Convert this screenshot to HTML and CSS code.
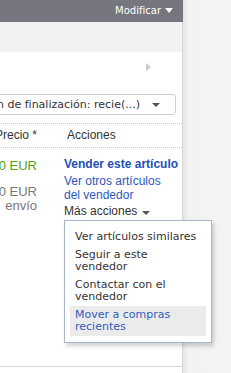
FILE: index.html
```html
<!DOCTYPE html>
<html lang="es">
<head>
<meta charset="utf-8">
<title>Compras</title>
<link rel="stylesheet" href="styles.css">
</head>
<body>
<div class="page">
  <div class="main">
    <div class="topbar"><span class="modify">Modificar</span><span class="tri-white"></span></div>
    <div class="band"></div>
    <div class="toolbar"><span class="tri-right"></span></div>
    <div class="sort"><span class="sort-text">Opción de finalización: recie(...)</span><span class="tri-down"></span></div>
    <div class="thead">
      <div class="th th-price">Precio *</div>
      <div class="th th-actions">Acciones</div>
    </div>
    <div class="row">
      <div class="price">
        <div class="price-main">0 EUR</div>
        <div class="price-ship">50 EUR</div>
        <div class="price-ship">envío</div>
      </div>
      <div class="actions">
        <a class="act-primary">Vender este artículo</a>
        <a class="act-link">Ver otros artículos del vendedor</a>
        <div class="more">
          <span class="more-label">Más acciones</span><span class="tri-more"></span>
          <ul class="menu">
            <li class="menu-item">Ver artículos similares</li>
            <li class="menu-item">Seguir a este vendedor</li>
            <li class="menu-item">Contactar con el vendedor</li>
            <li class="menu-item menu-item-active">Mover a compras recientes</li>
          </ul>
        </div>
      </div>
    </div>
    <div class="tail"></div>
  </div>
  <div class="side"></div>
</div>
</body>
</html>
```
FILE: styles.css
```css
* { box-sizing: border-box; }
html, body { margin: 0; padding: 0; }
body {
  width: 231px;
  height: 373px;
  overflow: hidden;
  background: #f4f4f4;
  font-family: "Liberation Sans", Arial, sans-serif;
}
.page {
  display: flex;
  height: 373px;
}
.main {
  width: 183px;
  flex: none;
  background: #fff;
  border-right: 1px solid #d9d9d9;
  display: flex;
  flex-direction: column;
}
.side {
  flex: 1;
  background: linear-gradient(to right, #e4e4e4, #f2f2f2 5px, #f4f4f4);
}
.topbar {
  height: 22px;
  margin-right: -1px;
  background: #75767e;
  display: flex;
  align-items: center;
  justify-content: flex-end;
  padding-right: 10px;
  padding-bottom: 2px;
  gap: 4px;
}
.modify {
  font-family: "DejaVu Sans", Verdana, sans-serif;
  font-size: 10px;
  color: #fff;
}
.tri-white {
  width: 0; height: 0;
  border-left: 4px solid transparent;
  border-right: 4px solid transparent;
  border-top: 5px solid #fff;
}
.band {
  height: 30px;
  background: #f2f2f2;
}
.toolbar {
  height: 42px;
  display: flex;
  justify-content: flex-end;
  align-items: flex-start;
  padding-top: 11px;
  padding-right: 31px;
}
.tri-right {
  width: 0; height: 0;
  border-top: 4px solid transparent;
  border-bottom: 4px solid transparent;
  border-left: 5px solid #c9c9c9;
}
.sort {
  height: 21px;
  margin: 0 6px 0 -60px;
  border: 1px solid #cfcfcf;
  border-radius: 3px;
  display: flex;
  justify-content: flex-end;
  align-items: center;
  padding-right: 15px;
  gap: 12px;
  overflow: hidden;
}
.sort-text {
  white-space: nowrap;
  font-family: "DejaVu Sans", Verdana, sans-serif;
  font-size: 11px;
  color: #333;
  flex: none;
}
.tri-down {
  flex: none;
  width: 0; height: 0;
  border-left: 4px solid transparent;
  border-right: 4px solid transparent;
  border-top: 4px solid #555;
}
.thead {
  margin-top: 8px;
  margin-left: -63px;
  border-top: 1px dotted #c8c8c8;
  border-bottom: 1px dotted #c8c8c8;
  display: grid;
  grid-template-columns: 100px 1fr;
  column-gap: 27px;
  font-size: 12px;
  line-height: 23px;
  color: #333;
}
.th-price { text-align: right; }
.th-actions { padding-left: 3px; }
.row {
  margin-left: -63px;
  display: grid;
  grid-template-columns: 100px 1fr;
  column-gap: 27px;
  padding-top: 9px;
}
.price { text-align: right; padding-top: 1px; }
.price-main {
  font-size: 13px;
  line-height: 16px;
  margin-bottom: 11px;
  color: #52a412;
}
.price-ship {
  font-size: 13px;
  line-height: 14px;
  color: #777;
}
.actions {
  font-size: 12px;
  line-height: 14px;
  display: flex;
  flex-direction: column;
  align-items: flex-start;
}
.act-primary {
  font-weight: bold;
  color: #2250b4;
  white-space: nowrap;
}
.act-link {
  margin-top: 3px;
  color: #2a58bc;
  width: 104px;
}
.more {
  margin-top: 2px;
  position: relative;
  display: flex;
  align-items: center;
  gap: 5px;
  color: #333;
}
.tri-more {
  width: 0; height: 0;
  margin-top: 3px;
  border-left: 4px solid transparent;
  border-right: 4px solid transparent;
  border-top: 4px solid #555;
}
.menu {
  position: absolute;
  top: calc(100% + 2px);
  left: 0;
  width: 148px;
  margin: 0;
  list-style: none;
  padding: 7px 5px 6px 5px;
  background: #fff;
  border: 1px solid #a9b6c8;
  box-shadow: 2px 3px 4px rgba(0, 0, 0, 0.18);
  z-index: 5;
}
.menu-item {
  padding: 3px 5px;
  font-family: "DejaVu Sans", Verdana, sans-serif;
  font-size: 11px;
  line-height: 12px;
  color: #333;
}
.menu-item-active {
  background: #ebebeb;
  color: #2f5dbd;
}
.tail {
  margin-top: auto;
  height: 7px;
  border-top: 1px solid #d4d4d4;
}
```
